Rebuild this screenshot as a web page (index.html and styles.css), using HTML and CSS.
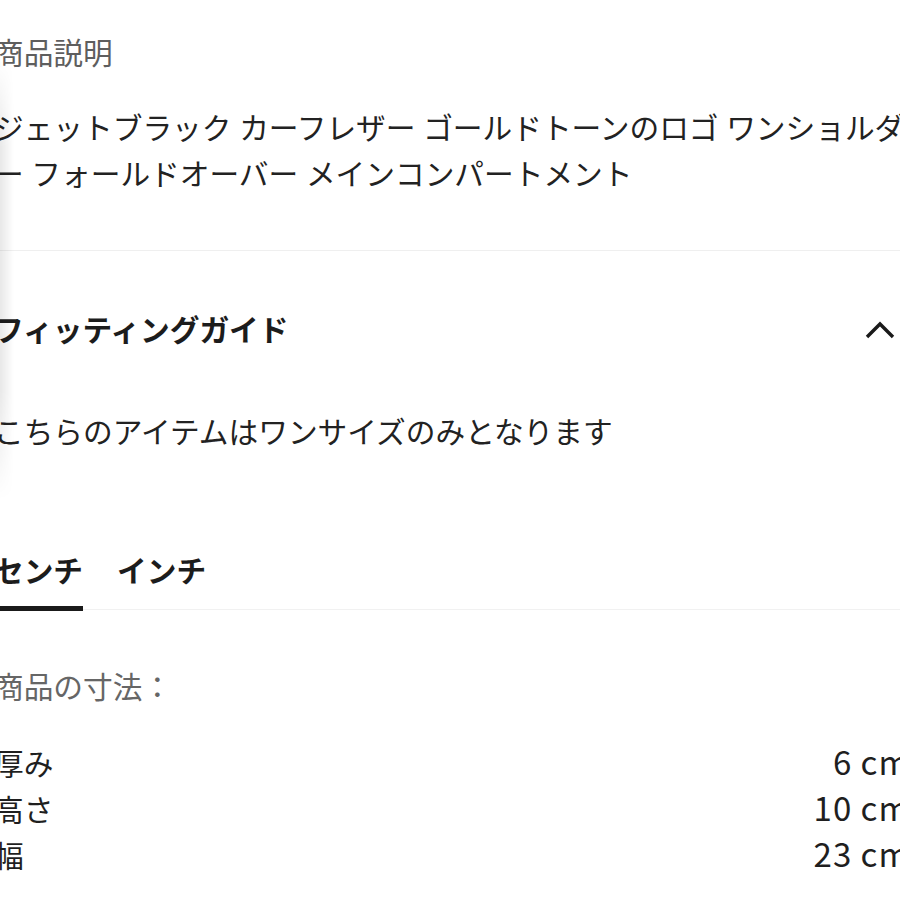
FILE: index.html
```html
<!DOCTYPE html>
<html lang="ja">
<head>
<meta charset="utf-8">
<title>商品説明</title>
<link rel="stylesheet" href="styles.css">
</head>
<body>
<div class="edge-shade"></div>
<main class="page">
  <section class="desc-section">
    <h2 class="section-title">商品説明</h2>
    <p class="desc">ジェットブラック カーフレザー ゴールドトーンのロゴ ワンショルダ<br>ー フォールドオーバー メインコンパートメント</p>
  </section>

  <section class="fit-section">
    <div class="fit-header">
      <h2 class="fit-title">フィッティングガイド</h2>
      <svg class="chevron" width="32" height="20" viewBox="0 0 32 20" aria-hidden="true">
        <polyline points="3,18 16,5 29,18" fill="none" stroke="#1a1a1a" stroke-width="3.4" stroke-linejoin="miter"/>
      </svg>
    </div>
    <p class="one-size">こちらのアイテムはワンサイズのみとなります</p>

    <div class="tabs">
      <div class="tab active">センチ</div>
      <div class="tab">インチ</div>
    </div>

    <p class="dims-title">商品の寸法：</p>
    <div class="dims">
      <div class="dim-row"><span class="dim-label">厚み</span><span class="dim-value">6 cm</span></div>
      <div class="dim-row"><span class="dim-label">高さ</span><span class="dim-value">10 cm</span></div>
      <div class="dim-row"><span class="dim-label">幅</span><span class="dim-value">23 cm</span></div>
    </div>
  </section>
</main>
</body>
</html>
```

FILE: styles.css
```css
html, body {
  margin: 0;
  padding: 0;
  background: #ffffff;
  overflow: hidden;
  width: 900px;
  height: 900px;
}

body {
  position: relative;
  font-family: "Noto Sans CJK JP", "Noto Sans", sans-serif;
  color: #1f1f1f;
  font-size: 29.7px;
}

.edge-shade {
  position: absolute;
  left: 0;
  top: 60px;
  width: 14px;
  height: 440px;
  background: linear-gradient(to right, rgba(0, 0, 0, 0.09), rgba(0, 0, 0, 0));
  -webkit-mask-image: linear-gradient(to bottom, transparent, #000 20%, #000 75%, transparent);
  mask-image: linear-gradient(to bottom, transparent, #000 20%, #000 75%, transparent);
  pointer-events: none;
  z-index: 2;
}

.page {
  width: 916px;
  margin-left: -6px;
  padding-top: 29px;
}

.section-title {
  margin: 0;
  font-size: 29.7px;
  font-weight: 400;
  line-height: 46px;
  color: #5e5e5e;
}

.desc {
  margin: 29px 0 0 0;
  font-size: 29.7px;
  line-height: 46px;
  white-space: nowrap;
  word-spacing: 1px;
  color: #222222;
}

.desc-section {
  padding-bottom: 54px;
  border-bottom: 1px solid #efefef;
}

.fit-section {
  padding-top: 55px;
}

.fit-header {
  display: flex;
  align-items: center;
  justify-content: space-between;
  padding-right: 14px;
}

.fit-title {
  margin: 0;
  font-size: 29.7px;
  font-weight: 700;
  line-height: 46px;
  color: #1c1c1c;
}

.chevron {
  display: block;
  margin-top: -1px;
}

.one-size {
  margin: 56px 0 0 0;
  font-size: 29.7px;
  line-height: 46px;
  color: #222222;
}

.tabs {
  display: flex;
  gap: 34px;
  margin-top: 93px;
  border-bottom: 1px solid #f1f1f1;
}

.tab {
  font-size: 29.7px;
  font-weight: 700;
  line-height: 46px;
  padding-bottom: 13px;
  color: #1c1c1c;
}

.tab.active {
  border-bottom: 5px solid #1a1a1a;
  margin-bottom: -2px;
}

.dims-title {
  margin: 53px 0 0 0;
  font-size: 29.7px;
  line-height: 46px;
  color: #666666;
}

.dims {
  margin-top: 30px;
  display: flex;
  flex-direction: column;
}

.dim-row {
  display: flex;
  justify-content: space-between;
  align-items: baseline;
  line-height: 45px;
  font-size: 29.7px;
  color: #1f1f1f;
}

.dim-value {
  font-size: 33px;
  letter-spacing: 1px;
}
```
